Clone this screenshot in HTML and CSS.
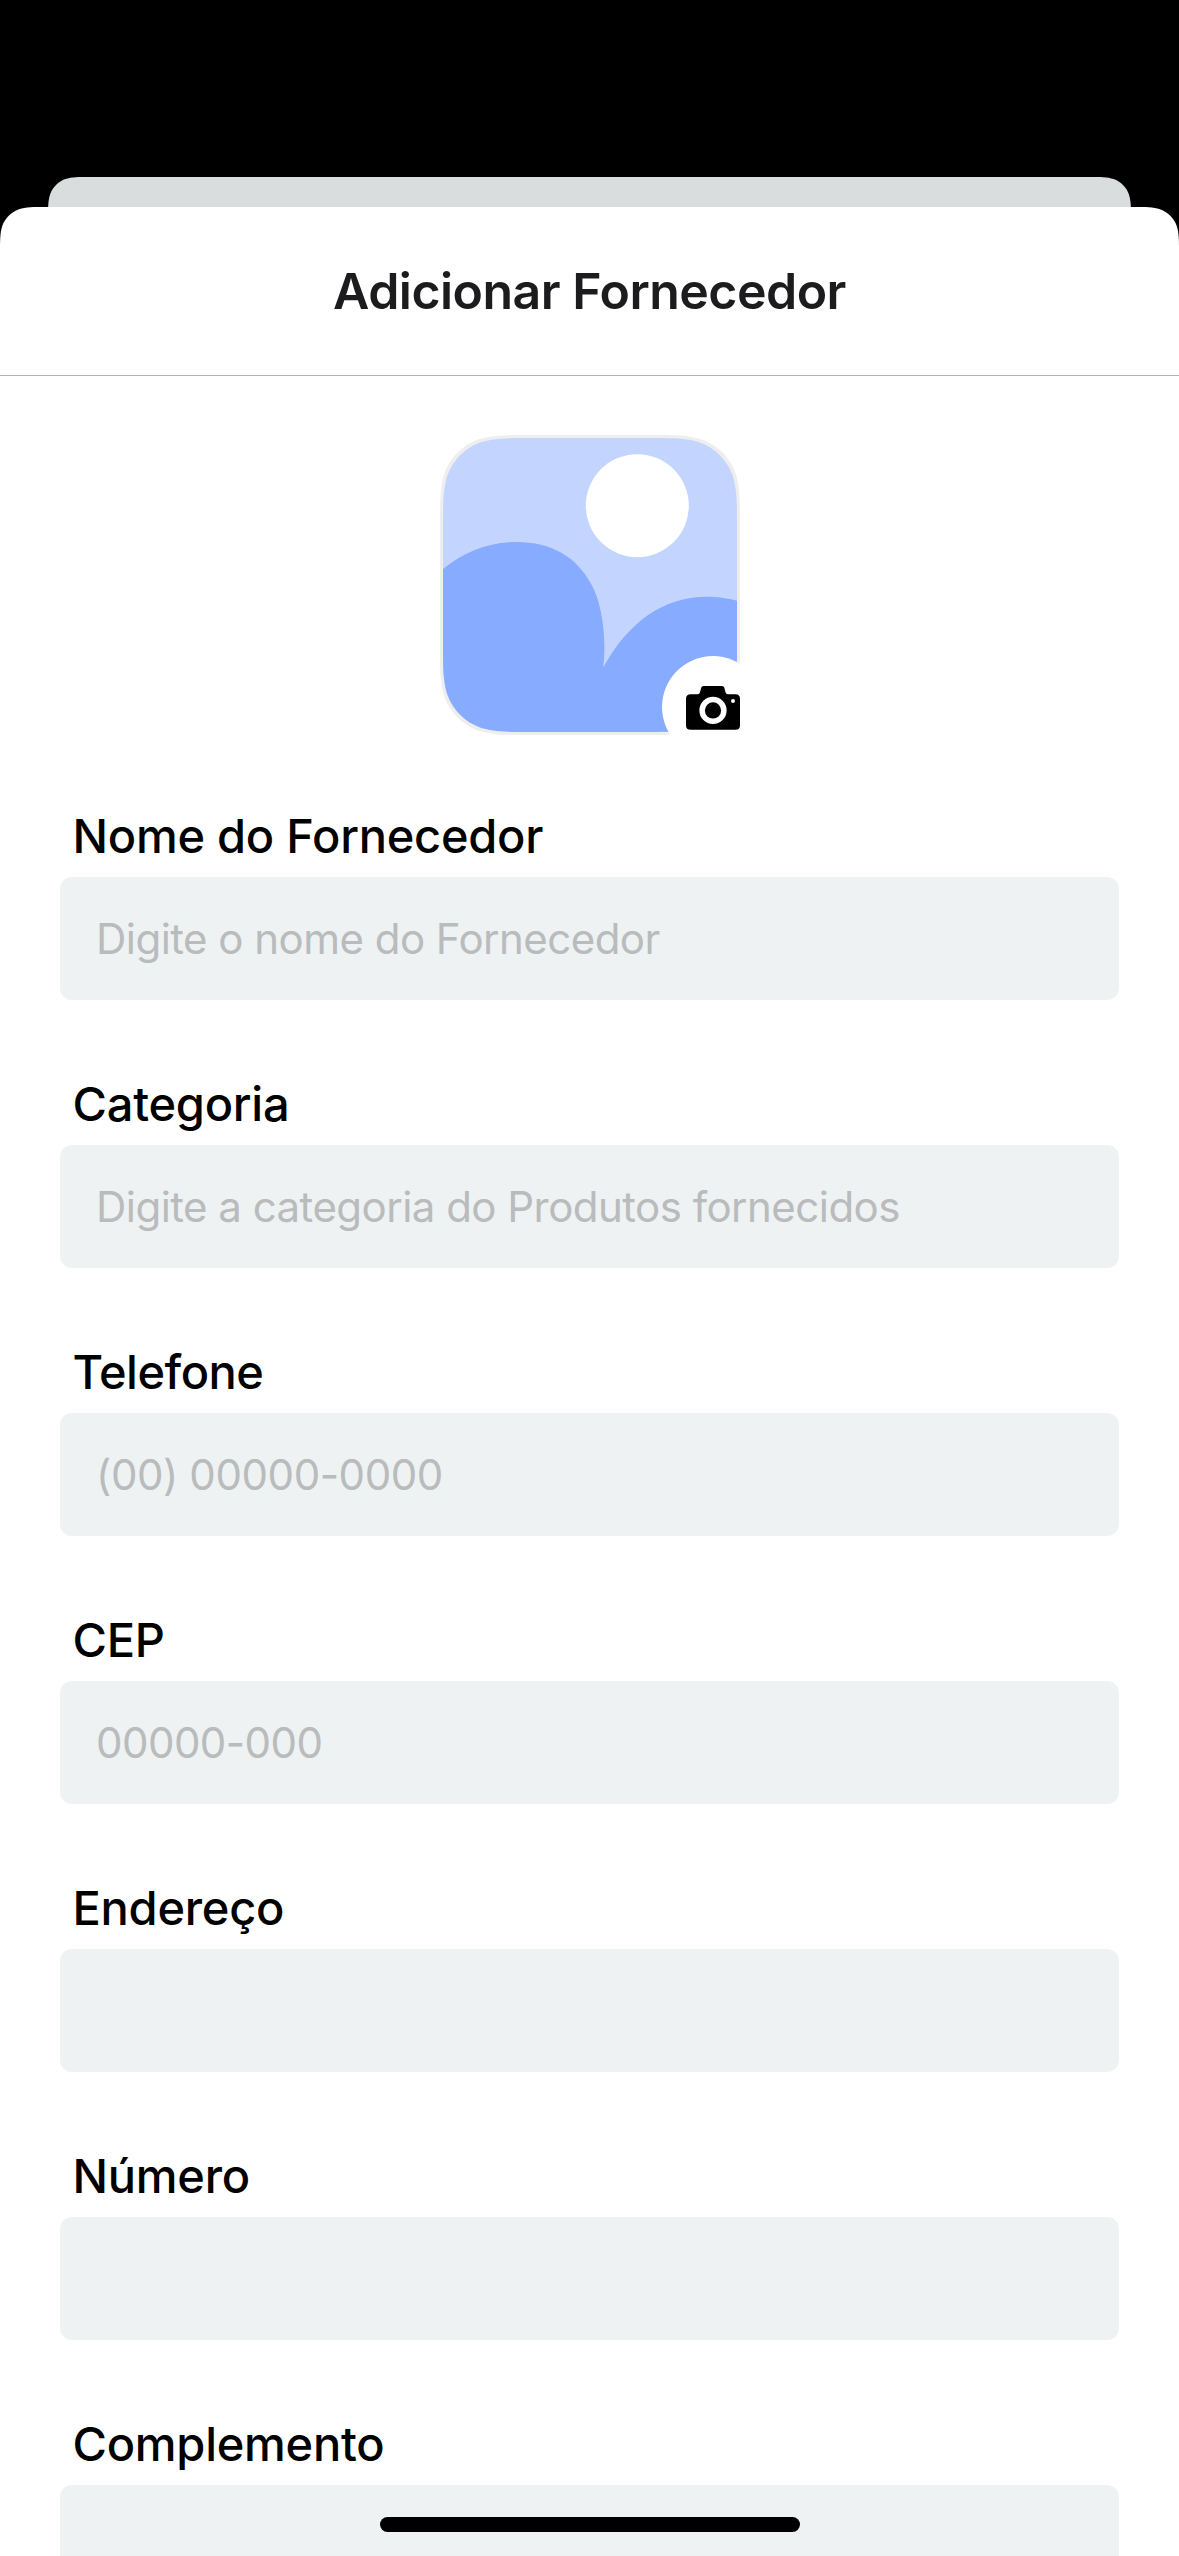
FILE: index.html
```html
<!DOCTYPE html>
<html lang="pt-BR">
<head>
<meta charset="utf-8">
<title>Adicionar Fornecedor</title>
<link rel="stylesheet" href="styles.css">
</head>
<body>
<div class="screen">
  <div class="back-card"></div>
  <main class="sheet">
    <header class="sheet-header"><h1 class="title">Adicionar Fornecedor</h1></header>
    <div class="photo">
      <svg width="300" height="300" viewBox="0 0 300 300" role="img" aria-label="Foto">
        <defs>
          <path id="tile" d="M0 91.72C0 65.31 0 52.1 4.49 37.89C10.14 22.37 22.37 10.14 37.89 4.49C52.1 0 65.31 0 91.72 0H208.28C234.69 0 247.9 0 262.11 4.49C277.63 10.14 289.86 22.37 295.51 37.89C300 52.1 300 65.31 300 91.72V208.28C300 234.69 300 247.9 295.51 262.11C289.86 277.63 277.63 289.86 262.11 295.51C247.9 300 234.69 300 208.28 300H91.72C65.31 300 52.1 300 37.89 295.51C22.37 289.86 10.14 277.63 4.49 262.11C0 247.9 0 234.69 0 208.28Z"/>
          <clipPath id="inner"><use href="#tile" transform="translate(3 3) scale(.98)"/></clipPath>
        </defs>
        <use href="#tile" fill="#eee"/>
        <g clip-path="url(#inner)">
          <rect width="300" height="300" fill="#c3d5ff"/>
          <circle cx="197.3" cy="70.700" r="51.5" fill="#fff"/>
          <path d="M0 136.500C23 117 47 107 76 107C112 107 137 122 151.700 150C161 167 167 199 163.300 232.500C188 187 224 161.700 266 161.700C279 161.700 289 163.500 300 166.500V300H0Z" fill="#86abff"/>
        </g>
        <circle cx="273" cy="272" r="51" fill="#fff"/>
        <path fill-rule="evenodd" d="M250.500 259.300H257.500Q259.500 259.300 260 257.300L261.200 252.700Q261.700 251 263.500 251H282Q283.800 251 284.300 252.700L285.500 257.300Q286 259.300 288 259.300H295.500Q300 259.300 300 263.800V290.300Q300 294.800 295.500 294.800H250.500Q246 294.800 246 290.300V263.800Q246 259.300 250.500 259.300ZM273 261.800a13.600 13.600 0 1 0 0 27.200a13.600 13.600 0 1 0 0-27.200ZM293 264a2 2 0 1 0 0 4a2 2 0 1 0 0-4Z"/>
        <circle cx="273" cy="275.400" r="8.100"/>
      </svg>
    </div>
    <form class="form">
      <label class="field"><span class="label">Nome do Fornecedor</span><input class="input" placeholder="Digite o nome do Fornecedor"></label>
      <label class="field"><span class="label">Categoria</span><input class="input" placeholder="Digite a categoria do Produtos fornecidos"></label>
      <label class="field"><span class="label label-tight">Telefone</span><input class="input input-phone" placeholder="(00) 00000-0000"></label>
      <label class="field"><span class="label">CEP</span><input class="input" placeholder="00000-000"></label>
      <label class="field"><span class="label">Endereço</span><input class="input"></label>
      <label class="field"><span class="label">Número</span><input class="input"></label>
      <label class="field"><span class="label">Complemento</span><input class="input"></label>
    </form>
  </main>
  <div class="home-indicator"></div>
</div>
</body>
</html>
```
FILE: styles.css
```css
* { box-sizing: border-box; }
body { margin: 0; background: #000; font-family: Inter, "Liberation Sans", sans-serif; }
.screen {
  position: relative;
  display: flex;
  flex-direction: column;
  height: 2556px;
  padding-top: 177px;
  overflow: hidden;
}
.back-card {
  flex: none;
  height: 80px;
  margin: 0 48px -50px;
  background: #d9dddd;
  clip-path: path("M0 42.1C0 30 0 23.9 2.07 17.4C4.66 10.3 10.3 4.66 17.4 2.07C23.9 0 30 0 42.1 0H1040.9C1053 0 1059.1 0 1065.6 2.07C1072.7 4.66 1078.34 10.3 1080.93 17.4C1083 23.9 1083 30 1083 42.1V80H0Z");
}
.sheet {
  flex: none;
  height: 2349px;
  overflow: hidden;
  background: #fff;
  clip-path: path("M0 45.86C0 32.65 0 26.05 2.25 18.94C5.07 11.18 11.18 5.07 18.94 2.25C26.05 0 32.65 0 45.86 0H1133.14C1146.35 0 1152.95 0 1160.06 2.25C1167.82 5.07 1173.93 11.18 1176.75 18.94C1179 26.05 1179 32.65 1179 45.86V2349H0Z");
}
.sheet-header {
  display: flex;
  justify-content: center;
  height: 169px;
  padding-top: 54px;
  border-bottom: 1px solid #b2b2b3;
}
.title {
  margin: 0;
  font-size: 50px;
  line-height: 60px;
  font-weight: 600;
  letter-spacing: -0.52px;
  color: #1c1c1e;
}
.photo { display: flex; justify-content: center; margin-top: 59px; padding-left: 1px; }
.photo svg { display: block; }
.form {
  display: flex;
  flex-direction: column;
  gap: 74px;
  padding: 71px 60px 0;
}
.field { display: flex; flex-direction: column; gap: 13px; }
.label {
  height: 58px;
  padding-left: 12.5px;
  font-size: 47px;
  line-height: 60px;
  font-weight: 500;
  letter-spacing: -0.25px;
  color: #000;
}
.label-tight { letter-spacing: -0.5px; }
.input {
  width: 100%;
  height: 123px;
  padding: 0 36px;
  border: 0;
  border-radius: 12px;
  background: #eef2f3;
  font: 400 42px/50px Inter, "Liberation Sans", sans-serif;
  letter-spacing: -0.53px;
}
.input-phone { letter-spacing: -0.42px; }
.input::placeholder { color: #b9bbbc; opacity: 1; }
.home-indicator {
  position: absolute;
  left: 380px;
  bottom: 24px;
  width: 420px;
  height: 15px;
  border-radius: 8px;
  background: #000;
}
```
